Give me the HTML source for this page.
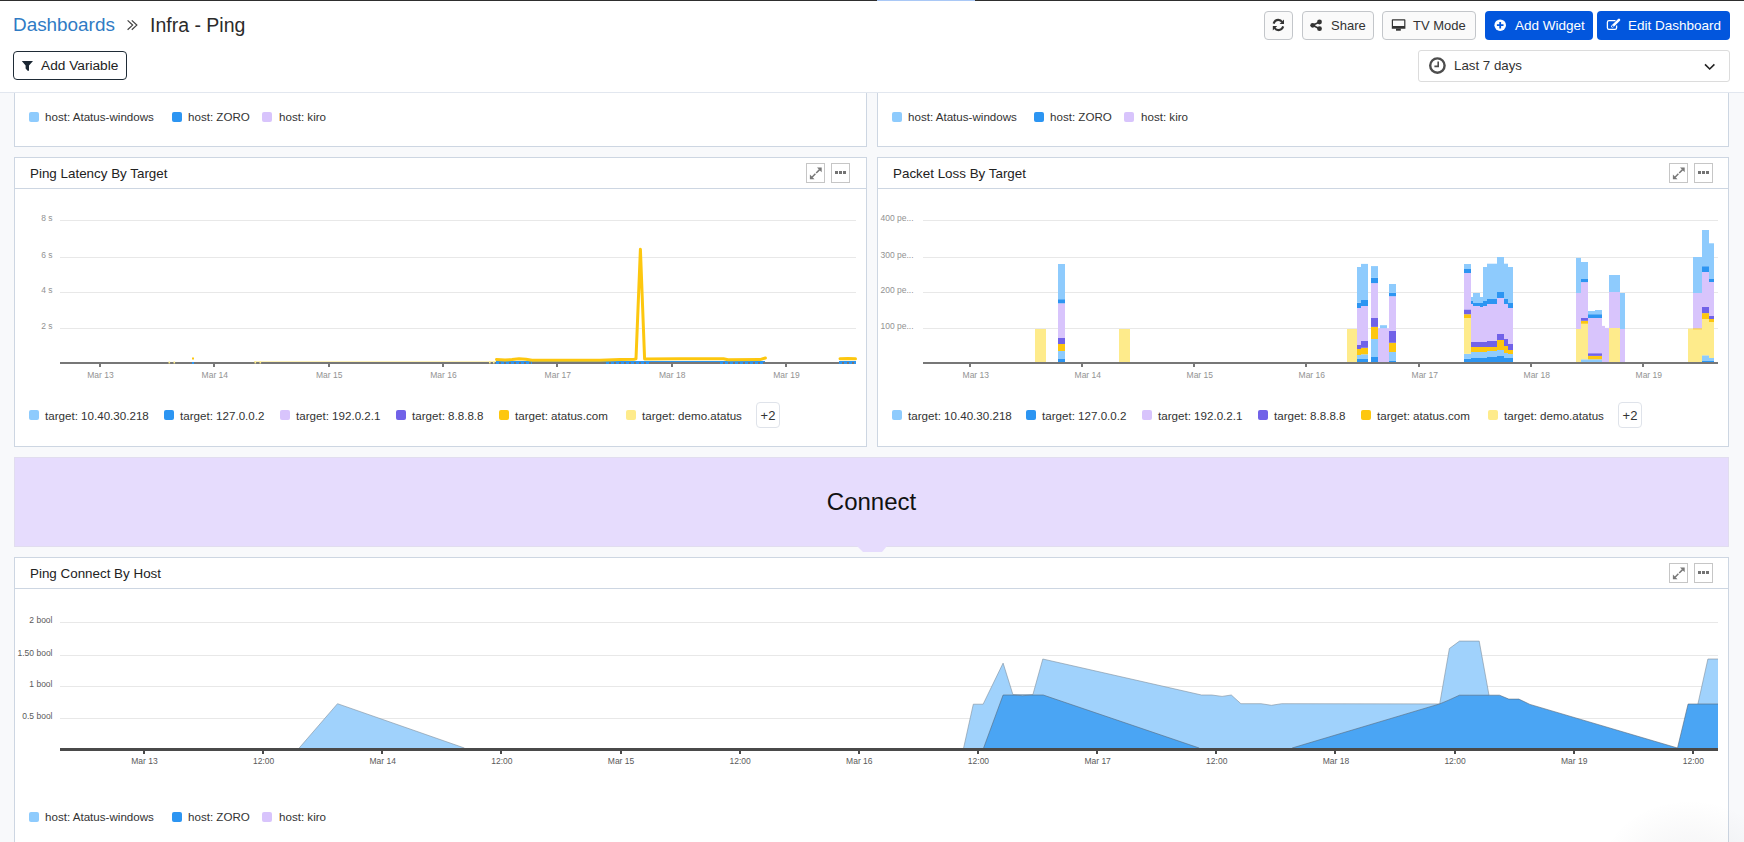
<!DOCTYPE html>
<html><head><meta charset="utf-8"><style>
*{box-sizing:border-box;margin:0;padding:0}
html,body{width:1744px;height:842px;overflow:hidden;background:#fff;font-family:"Liberation Sans",sans-serif;color:#2b2b2b}
.a{position:absolute}
.crumb{top:12px;font-size:18.7px;line-height:24px;white-space:nowrap}
.btn{top:11px;height:29px;border:1px solid #c3c6ca;border-radius:4px;background:#fafafa;font-size:13px;color:#333;white-space:nowrap}
.bbtn{top:11px;height:29px;border-radius:4px;background:#0256dd;color:#fff;font-size:13.5px;white-space:nowrap}
.t{position:absolute;line-height:16px;white-space:nowrap}
#dash{left:0;top:93px;width:1744px;height:749px;background:#f8f9fb;overflow:hidden}
#inner{position:absolute;left:0;top:-93px;width:1744px;height:842px}
.w{position:absolute;background:#fff;border:1px solid #cdd6e2}
.hl{position:absolute;height:1px;background:#cdd6e2}
.wt{position:absolute;font-size:13.4px;line-height:16px;color:#222;white-space:nowrap}
.ib{position:absolute;width:18.5px;height:19.5px;border:1px solid #c6c6c6;background:#fff}
.lg{position:absolute;font-size:11.6px;line-height:14px;color:#333;white-space:nowrap}
.sq{position:absolute;width:10px;height:10px;border-radius:2px}
.plus{position:absolute;width:24px;height:26px;border:1px solid #dfe3ea;border-radius:4px;font-size:13px;line-height:26px;text-align:center;color:#333}
svg{position:absolute;left:0;top:0}
.al{font-family:"Liberation Sans",sans-serif;font-size:8.5px;fill:#929292}
.al2{font-family:"Liberation Sans",sans-serif;font-size:8.5px;fill:#5a5a5a}
</style></head><body>
<div class="a" style="left:0;top:0;width:1744px;height:1px;background:#2e2e2e"></div>
<div class="a" style="left:877px;top:0;width:98px;height:1px;background:#a9c8f6"></div>
<div class="a crumb" style="left:13px;top:13px;font-size:18.9px;color:#2f7bc4">Dashboards</div>
<div class="a crumb" style="left:150px;top:13px;font-size:19.5px;color:#2b2b2b">Infra - Ping</div>
<div class="a btn" style="left:1264px;width:29px"></div>
<div class="a btn" style="left:1302px;width:72px"><span class="t" style="left:28px;top:6px">Share</span></div>
<div class="a btn" style="left:1382px;width:94px"><span class="t" style="left:30px;top:6px">TV Mode</span></div>
<div class="a bbtn" style="left:1485px;width:108px"><span class="t" style="left:30px;top:7px">Add Widget</span></div>
<div class="a bbtn" style="left:1597px;width:133px"><span class="t" style="left:31px;top:7px">Edit Dashboard</span></div>
<div class="a" style="left:13px;top:51px;width:114px;height:29px;border:1.5px solid #1f2b36;border-radius:4px"><span class="t" style="left:27px;top:6px;font-size:13.7px;color:#222">Add Variable</span></div>
<div class="a" style="left:1418px;top:50px;width:312px;height:32px;border:1px solid #dcdcdc;border-radius:3px;background:#fff"><span class="t" style="left:35px;top:7px;font-size:13.3px;color:#333">Last 7 days</span></div>
<div class="a" style="left:0;top:92px;width:1744px;height:1px;background:#e2e7ef"></div>
<svg width="1744" height="92" style="left:0;top:0"><path d="M127.6,20.4 L132.6,25.1 L127.6,29.8 M131.8,20.4 L136.8,25.1 L131.8,29.8" fill="none" stroke="#444" stroke-width="1.25"/><path d="M1273.6,23.6 C1274.6,20.8 1276.8,19.9 1278.3,19.9 C1280.2,19.9 1281.4,20.8 1282.2,22" fill="none" stroke="#333" stroke-width="2.1"/><polygon points="1279.6,24 1284,24 1284,19.6" fill="#333"/><path d="M1283.2,26.4 C1282.2,29.2 1280,30.1 1278.5,30.1 C1276.6,30.1 1275.4,29.2 1274.6,28" fill="none" stroke="#333" stroke-width="2.1"/><polygon points="1277.2,26 1272.8,26 1272.8,30.4" fill="#333"/><path d="M1319.5,22 L1312.7,25.3 L1319.5,28.7" fill="none" stroke="#333" stroke-width="1.6"/><circle cx="1319.5" cy="22" r="2.4" fill="#333"/><circle cx="1312.7" cy="25.3" r="2.4" fill="#333"/><circle cx="1319.5" cy="28.7" r="2.4" fill="#333"/><path d="M1392.6,19.2 h12 a0.8,0.8 0 0 1 0.8,0.8 v8.7 h-13.6 v-8.7 a0.8,0.8 0 0 1 0.8,-0.8 z M1393,20.4 v5.5 h11.2 v-5.5 z" fill="#333" fill-rule="evenodd"/><rect x="1396" y="28.6" width="4.8" height="2.1" fill="#333"/><circle cx="1500.2" cy="25.2" r="5.8" fill="#fff"/><path d="M1500.2,21.9 V28.6 M1496.9,25.2 H1503.5" stroke="#0256dd" stroke-width="1.8"/><path d="M1615.5,20.6 H1609 a1.6,1.6 0 0 0 -1.6,1.6 V27.8 a1.6,1.6 0 0 0 1.6,1.6 H1615 a1.6,1.6 0 0 0 1.6,-1.6 V25.6" fill="none" stroke="#fff" stroke-width="1.3"/><path d="M1612.4,26.4 L1619,19.8" stroke="#fff" stroke-width="2.6" stroke-linecap="round"/><circle cx="1612.8" cy="26.4" r="0.8" fill="#0256dd"/><polygon points="21.8,61 33,61 29,65.4 29,70.8 27.6,70.8 25.6,68.6 25.6,65.4" fill="#1b2733"/><circle cx="1437.4" cy="65.6" r="7.2" fill="none" stroke="#4d4d4d" stroke-width="2.4"/><path d="M1438.2,61.4 V66.4 H1434.4" fill="none" stroke="#4d4d4d" stroke-width="1.6"/><path d="M1705,64.4 L1709.7,69 L1714.4,64.4" fill="none" stroke="#222" stroke-width="1.6"/></svg>
<div class="a" id="dash"><div id="inner">
<div class="w" style="left:14px;top:40px;width:853px;height:107px"></div>
<div class="sq" style="left:29px;top:112px;background:#8ecbfd"></div><div class="lg" style="left:45px;top:110px">host: Atatus-windows</div><div class="sq" style="left:172px;top:112px;background:#2c95f2"></div><div class="lg" style="left:188px;top:110px">host: ZORO</div><div class="sq" style="left:262px;top:112px;background:#d8c4fc"></div><div class="lg" style="left:279px;top:110px">host: kiro</div>
<div class="w" style="left:877px;top:40px;width:852px;height:107px"></div>
<div class="sq" style="left:892px;top:112px;background:#8ecbfd"></div><div class="lg" style="left:908px;top:110px">host: Atatus-windows</div><div class="sq" style="left:1034px;top:112px;background:#2c95f2"></div><div class="lg" style="left:1050px;top:110px">host: ZORO</div><div class="sq" style="left:1124px;top:112px;background:#d8c4fc"></div><div class="lg" style="left:1141px;top:110px">host: kiro</div>
<div class="w" style="left:14px;top:157px;width:853px;height:290px"></div>
<div class="hl" style="left:14px;top:188px;width:853px"></div><div class="wt" style="left:30px;top:166px">Ping Latency By Target</div><div class="ib" style="left:806px;top:163px"></div><div class="ib" style="left:831px;top:163px"></div><svg width="20" height="20" style="left:806px;top:163px"><path d="M13.6,6.6 L10.2,10 M6.0,14.2 L9.4,10.8" stroke="#787878" stroke-width="1.5"/><polygon points="11.0,4.5 15.7,4.5 15.7,9.2" fill="#787878"/><polygon points="3.9,11.6 3.9,16.2 8.5,16.2" fill="#787878"/></svg><svg width="20" height="20" style="left:831px;top:163px"><rect x="4" y="8" width="3" height="3" fill="#737373"/><rect x="8" y="8" width="3" height="3" fill="#737373"/><rect x="12" y="8" width="3" height="3" fill="#737373"/></svg>
<div class="sq" style="left:29px;top:410px;background:#8ecbfd"></div><div class="lg" style="left:45px;top:409px">target: 10.40.30.218</div><div class="sq" style="left:164px;top:410px;background:#2c95f2"></div><div class="lg" style="left:180px;top:409px">target: 127.0.0.2</div><div class="sq" style="left:280px;top:410px;background:#d8c4fc"></div><div class="lg" style="left:296px;top:409px">target: 192.0.2.1</div><div class="sq" style="left:396px;top:410px;background:#7162e8"></div><div class="lg" style="left:412px;top:409px">target: 8.8.8.8</div><div class="sq" style="left:499px;top:410px;background:#fdc70f"></div><div class="lg" style="left:515px;top:409px">target: atatus.com</div><div class="sq" style="left:626px;top:410px;background:#feeb8b"></div><div class="lg" style="left:642px;top:409px">target: demo.atatus</div><div class="plus" style="left:756px;top:402px">+2</div>
<div class="w" style="left:877px;top:157px;width:852px;height:290px"></div>
<div class="hl" style="left:877px;top:188px;width:852px"></div><div class="wt" style="left:893px;top:166px">Packet Loss By Target</div><div class="ib" style="left:1669px;top:163px"></div><div class="ib" style="left:1694px;top:163px"></div><svg width="20" height="20" style="left:1669px;top:163px"><path d="M13.6,6.6 L10.2,10 M6.0,14.2 L9.4,10.8" stroke="#787878" stroke-width="1.5"/><polygon points="11.0,4.5 15.7,4.5 15.7,9.2" fill="#787878"/><polygon points="3.9,11.6 3.9,16.2 8.5,16.2" fill="#787878"/></svg><svg width="20" height="20" style="left:1694px;top:163px"><rect x="4" y="8" width="3" height="3" fill="#737373"/><rect x="8" y="8" width="3" height="3" fill="#737373"/><rect x="12" y="8" width="3" height="3" fill="#737373"/></svg>
<div class="sq" style="left:892px;top:410px;background:#8ecbfd"></div><div class="lg" style="left:908px;top:409px">target: 10.40.30.218</div><div class="sq" style="left:1026px;top:410px;background:#2c95f2"></div><div class="lg" style="left:1042px;top:409px">target: 127.0.0.2</div><div class="sq" style="left:1142px;top:410px;background:#d8c4fc"></div><div class="lg" style="left:1158px;top:409px">target: 192.0.2.1</div><div class="sq" style="left:1258px;top:410px;background:#7162e8"></div><div class="lg" style="left:1274px;top:409px">target: 8.8.8.8</div><div class="sq" style="left:1361px;top:410px;background:#fdc70f"></div><div class="lg" style="left:1377px;top:409px">target: atatus.com</div><div class="sq" style="left:1488px;top:410px;background:#feeb8b"></div><div class="lg" style="left:1504px;top:409px">target: demo.atatus</div><div class="plus" style="left:1618px;top:402px">+2</div>
<div class="a" style="left:14px;top:457px;width:1715px;height:90px;background:#e6dcfd;border:1px solid #e1ddef"></div>
<svg width="1744" height="842" style="left:0;top:0"><polygon points="857,546 887,546 882,552 863,552" fill="#e6dcfd"/></svg>
<div class="a" style="left:14px;top:487px;width:1715px;text-align:center;font-size:24px;line-height:30px;color:#111">Connect</div>
<div class="w" style="left:14px;top:557px;width:1715px;height:320px"></div>
<div class="hl" style="left:14px;top:588px;width:1715px"></div><div class="wt" style="left:30px;top:566px">Ping Connect By Host</div><div class="ib" style="left:1669px;top:563px"></div><div class="ib" style="left:1694px;top:563px"></div><svg width="20" height="20" style="left:1669px;top:563px"><path d="M13.6,6.6 L10.2,10 M6.0,14.2 L9.4,10.8" stroke="#787878" stroke-width="1.5"/><polygon points="11.0,4.5 15.7,4.5 15.7,9.2" fill="#787878"/><polygon points="3.9,11.6 3.9,16.2 8.5,16.2" fill="#787878"/></svg><svg width="20" height="20" style="left:1694px;top:563px"><rect x="4" y="8" width="3" height="3" fill="#737373"/><rect x="8" y="8" width="3" height="3" fill="#737373"/><rect x="12" y="8" width="3" height="3" fill="#737373"/></svg>
<div class="sq" style="left:29px;top:812px;background:#8ecbfd"></div><div class="lg" style="left:45px;top:810px">host: Atatus-windows</div><div class="sq" style="left:172px;top:812px;background:#2c95f2"></div><div class="lg" style="left:188px;top:810px">host: ZORO</div><div class="sq" style="left:262px;top:812px;background:#d8c4fc"></div><div class="lg" style="left:279px;top:810px">host: kiro</div>
<svg width="1744" height="842"><rect x="60" y="220" width="796" height="1" fill="#e8e8e8"/><text class="al" x="52.5" y="221" text-anchor="end">8 s</text><rect x="60" y="257" width="796" height="1" fill="#e8e8e8"/><text class="al" x="52.5" y="258" text-anchor="end">6 s</text><rect x="60" y="292" width="796" height="1" fill="#e8e8e8"/><text class="al" x="52.5" y="293" text-anchor="end">4 s</text><rect x="60" y="328" width="796" height="1" fill="#e8e8e8"/><text class="al" x="52.5" y="329" text-anchor="end">2 s</text><rect x="60" y="362" width="796" height="2" fill="#777"/><rect x="99" y="364" width="2" height="3" fill="#777"/><text class="al" x="100.5" y="378" text-anchor="middle">Mar 13</text><rect x="213" y="364" width="2" height="3" fill="#777"/><text class="al" x="214.82999999999998" y="378" text-anchor="middle">Mar 14</text><rect x="328" y="364" width="2" height="3" fill="#777"/><text class="al" x="329.15999999999997" y="378" text-anchor="middle">Mar 15</text><rect x="442" y="364" width="2" height="3" fill="#777"/><text class="al" x="443.49" y="378" text-anchor="middle">Mar 16</text><rect x="556" y="364" width="2" height="3" fill="#777"/><text class="al" x="557.8199999999999" y="378" text-anchor="middle">Mar 17</text><rect x="671" y="364" width="2" height="3" fill="#777"/><text class="al" x="672.15" y="378" text-anchor="middle">Mar 18</text><rect x="785" y="364" width="2" height="3" fill="#777"/><text class="al" x="786.48" y="378" text-anchor="middle">Mar 19</text><rect x="254" y="361" width="242" height="1" fill="#feeb8b" opacity="0.6"/><rect x="168.5" y="361.5" width="1.6" height="2" fill="#feeb8b"/><rect x="173.5" y="361.5" width="1.6" height="2" fill="#feeb8b"/><rect x="254.5" y="361.5" width="1.6" height="2" fill="#feeb8b"/><rect x="259.5" y="361.5" width="1.6" height="2" fill="#feeb8b"/><rect x="192" y="357.5" width="2" height="2" fill="#fdc70f"/><rect x="192" y="362" width="2" height="2" fill="#2c95f2"/><rect x="489" y="361.5" width="1.6" height="2" fill="#feeb8b"/><rect x="493" y="361.5" width="1.6" height="2" fill="#feeb8b"/><rect x="496" y="361" width="269" height="1" fill="#2c95f2"/><rect x="839" y="361" width="17" height="1" fill="#2c95f2"/><line x1="496" y1="363" x2="532" y2="363" stroke="#2c95f2" stroke-width="2" stroke-dasharray="3,2"/><line x1="606" y1="363" x2="651" y2="363" stroke="#2c95f2" stroke-width="2" stroke-dasharray="3,2"/><line x1="720" y1="363" x2="765" y2="363" stroke="#2c95f2" stroke-width="2" stroke-dasharray="3,2"/><line x1="839" y1="363" x2="856" y2="363" stroke="#2c95f2" stroke-width="2" stroke-dasharray="3,2"/><polyline points="496.5,359.5 505,360 512,359.5 519,358.8 526,359.3 532,360.3 560,360.3 600,360.2 620,359.5 634,359.2 636,358.8 640.4,249.3 644.6,359 680,358.8 723.5,358.8 728,359.8 760,359.6 765.4,358" fill="none" stroke="#fdc70f" stroke-width="3" stroke-linejoin="round" stroke-linecap="round"/><polyline points="840,358.8 848,358.4 855.5,358.8" fill="none" stroke="#fdc70f" stroke-width="3" stroke-linecap="round"/><rect x="923" y="220" width="795" height="1" fill="#e8e8e8"/><text class="al" x="880.5" y="221" text-anchor="start">400 pe...</text><rect x="923" y="257" width="795" height="1" fill="#e8e8e8"/><text class="al" x="880.5" y="258" text-anchor="start">300 pe...</text><rect x="923" y="292" width="795" height="1" fill="#e8e8e8"/><text class="al" x="880.5" y="293" text-anchor="start">200 pe...</text><rect x="923" y="328" width="795" height="1" fill="#e8e8e8"/><text class="al" x="880.5" y="329" text-anchor="start">100 pe...</text><rect x="923" y="362" width="795" height="2" fill="#777"/><rect x="969" y="364" width="2" height="3" fill="#777"/><text class="al" x="975.8" y="378" text-anchor="middle">Mar 13</text><rect x="1081" y="364" width="2" height="3" fill="#777"/><text class="al" x="1087.8" y="378" text-anchor="middle">Mar 14</text><rect x="1193" y="364" width="2" height="3" fill="#777"/><text class="al" x="1199.8" y="378" text-anchor="middle">Mar 15</text><rect x="1305" y="364" width="2" height="3" fill="#777"/><text class="al" x="1311.8" y="378" text-anchor="middle">Mar 16</text><rect x="1418" y="364" width="2" height="3" fill="#777"/><text class="al" x="1424.8" y="378" text-anchor="middle">Mar 17</text><rect x="1530" y="364" width="2" height="3" fill="#777"/><text class="al" x="1536.8" y="378" text-anchor="middle">Mar 18</text><rect x="1642" y="364" width="2" height="3" fill="#777"/><text class="al" x="1648.8" y="378" text-anchor="middle">Mar 19</text><rect x="1035" y="329" width="11" height="33.0" fill="#feeb8b"/><rect x="1058" y="359" width="7" height="3.0" fill="#2c95f2"/><rect x="1058" y="351" width="7" height="8.0" fill="#8ecbfd"/><rect x="1058" y="344" width="7" height="7.0" fill="#fdc70f"/><rect x="1058" y="338" width="7" height="6.0" fill="#7162e8"/><rect x="1058" y="303.3" width="7" height="34.7" fill="#d8c4fc"/><rect x="1058" y="299.2" width="7" height="4.1" fill="#2c95f2"/><rect x="1058" y="264" width="7" height="35.2" fill="#8ecbfd"/><rect x="1119" y="329" width="11" height="33.0" fill="#feeb8b"/><rect x="1347" y="329" width="12" height="33.0" fill="#feeb8b"/><rect x="1357" y="359" width="4" height="3.0" fill="#2c95f2"/><rect x="1357" y="355" width="4" height="4.0" fill="#8ecbfd"/><rect x="1357" y="349" width="4" height="6.0" fill="#fdc70f"/><rect x="1357" y="345" width="4" height="4.0" fill="#7162e8"/><rect x="1357" y="308" width="4" height="37.0" fill="#d8c4fc"/><rect x="1357" y="302.7" width="4" height="5.3" fill="#2c95f2"/><rect x="1357" y="267" width="4" height="35.7" fill="#8ecbfd"/><rect x="1361" y="359" width="7" height="3.0" fill="#2c95f2"/><rect x="1361" y="354.3" width="7" height="4.7" fill="#8ecbfd"/><rect x="1361" y="347.8" width="7" height="6.5" fill="#fdc70f"/><rect x="1361" y="341" width="7" height="6.8" fill="#7162e8"/><rect x="1361" y="306" width="7" height="35.0" fill="#d8c4fc"/><rect x="1361" y="300" width="7" height="6.0" fill="#2c95f2"/><rect x="1361" y="263.9" width="7" height="36.1" fill="#8ecbfd"/><rect x="1371" y="357" width="7" height="5.0" fill="#2c95f2"/><rect x="1371" y="339" width="7" height="18.0" fill="#8ecbfd"/><rect x="1371" y="326.9" width="7" height="12.1" fill="#fdc70f"/><rect x="1371" y="318" width="7" height="8.9" fill="#7162e8"/><rect x="1371" y="283.1" width="7" height="34.9" fill="#d8c4fc"/><rect x="1371" y="277.9" width="7" height="5.2" fill="#2c95f2"/><rect x="1371" y="266.1" width="7" height="11.8" fill="#8ecbfd"/><rect x="1378" y="328.2" width="11" height="33.8" fill="#d8c4fc"/><rect x="1380" y="328.2" width="7" height="33.8" fill="#d8c4fc"/><rect x="1380" y="325.2" width="7" height="3.0" fill="#8ecbfd"/><rect x="1389" y="361" width="7" height="1.0" fill="#2c95f2"/><rect x="1389" y="352" width="7" height="9.0" fill="#8ecbfd"/><rect x="1389" y="342.8" width="7" height="9.2" fill="#fdc70f"/><rect x="1389" y="330.8" width="7" height="12.0" fill="#7162e8"/><rect x="1389" y="296.2" width="7" height="34.6" fill="#d8c4fc"/><rect x="1389" y="292.9" width="7" height="3.3" fill="#2c95f2"/><rect x="1389" y="284" width="7" height="8.9" fill="#8ecbfd"/><rect x="1464" y="358.6" width="7" height="3.4" fill="#2c95f2"/><rect x="1464" y="353.8" width="7" height="4.8" fill="#8ecbfd"/><rect x="1464" y="318" width="7" height="35.8" fill="#feeb8b"/><rect x="1464" y="314.2" width="7" height="3.8" fill="#fdc70f"/><rect x="1464" y="309.4" width="7" height="4.8" fill="#7162e8"/><rect x="1464" y="273" width="7" height="36.4" fill="#d8c4fc"/><rect x="1464" y="269" width="7" height="4.0" fill="#2c95f2"/><rect x="1464" y="264" width="7" height="5.0" fill="#8ecbfd"/><rect x="1471" y="358" width="2" height="4.0" fill="#2c95f2"/><rect x="1471" y="352" width="2" height="6.0" fill="#8ecbfd"/><rect x="1471" y="347" width="2" height="5.0" fill="#fdc70f"/><rect x="1471" y="342" width="2" height="5.0" fill="#7162e8"/><rect x="1471" y="304" width="2" height="38.0" fill="#d8c4fc"/><rect x="1471" y="301" width="2" height="3.0" fill="#2c95f2"/><rect x="1471" y="297" width="2" height="4.0" fill="#8ecbfd"/><rect x="1473" y="358" width="7" height="4.0" fill="#2c95f2"/><rect x="1473" y="352" width="7" height="6.0" fill="#8ecbfd"/><rect x="1473" y="347" width="7" height="5.0" fill="#fdc70f"/><rect x="1473" y="342" width="7" height="5.0" fill="#7162e8"/><rect x="1473" y="306" width="7" height="36.0" fill="#d8c4fc"/><rect x="1473" y="303" width="7" height="3.0" fill="#2c95f2"/><rect x="1473" y="293" width="7" height="10.0" fill="#8ecbfd"/><rect x="1480" y="358" width="3" height="4.0" fill="#2c95f2"/><rect x="1480" y="352" width="3" height="6.0" fill="#8ecbfd"/><rect x="1480" y="347" width="3" height="5.0" fill="#fdc70f"/><rect x="1480" y="342" width="3" height="5.0" fill="#7162e8"/><rect x="1480" y="307" width="3" height="35.0" fill="#d8c4fc"/><rect x="1480" y="303" width="3" height="4.0" fill="#2c95f2"/><rect x="1480" y="297" width="3" height="6.0" fill="#8ecbfd"/><rect x="1483" y="358" width="4" height="4.0" fill="#2c95f2"/><rect x="1483" y="352" width="4" height="6.0" fill="#8ecbfd"/><rect x="1483" y="347" width="4" height="5.0" fill="#fdc70f"/><rect x="1483" y="342" width="4" height="5.0" fill="#7162e8"/><rect x="1483" y="306" width="4" height="36.0" fill="#d8c4fc"/><rect x="1483" y="301" width="4" height="5.0" fill="#2c95f2"/><rect x="1483" y="267" width="4" height="34.0" fill="#8ecbfd"/><rect x="1487" y="357" width="10" height="5.0" fill="#2c95f2"/><rect x="1487" y="351" width="10" height="6.0" fill="#8ecbfd"/><rect x="1487" y="347" width="10" height="4.0" fill="#fdc70f"/><rect x="1487" y="341" width="10" height="6.0" fill="#7162e8"/><rect x="1487" y="304" width="10" height="37.0" fill="#d8c4fc"/><rect x="1487" y="299" width="10" height="5.0" fill="#2c95f2"/><rect x="1487" y="263.7" width="10" height="35.3" fill="#8ecbfd"/><rect x="1497" y="356" width="7" height="6.0" fill="#2c95f2"/><rect x="1497" y="350" width="7" height="6.0" fill="#8ecbfd"/><rect x="1497" y="340" width="7" height="10.0" fill="#fdc70f"/><rect x="1497" y="334" width="7" height="6.0" fill="#7162e8"/><rect x="1497" y="298" width="7" height="36.0" fill="#d8c4fc"/><rect x="1497" y="292" width="7" height="6.0" fill="#2c95f2"/><rect x="1497" y="257" width="7" height="35.0" fill="#8ecbfd"/><rect x="1504" y="358" width="4" height="4.0" fill="#2c95f2"/><rect x="1504" y="353" width="4" height="5.0" fill="#8ecbfd"/><rect x="1504" y="346" width="4" height="7.0" fill="#fdc70f"/><rect x="1504" y="339" width="4" height="7.0" fill="#7162e8"/><rect x="1504" y="304" width="4" height="35.0" fill="#d8c4fc"/><rect x="1504" y="299" width="4" height="5.0" fill="#2c95f2"/><rect x="1504" y="263.7" width="4" height="35.3" fill="#8ecbfd"/><rect x="1508" y="358" width="5" height="4.0" fill="#2c95f2"/><rect x="1508" y="354" width="5" height="4.0" fill="#8ecbfd"/><rect x="1508" y="350" width="5" height="4.0" fill="#fdc70f"/><rect x="1508" y="344" width="5" height="6.0" fill="#7162e8"/><rect x="1508" y="308" width="5" height="36.0" fill="#d8c4fc"/><rect x="1508" y="303" width="5" height="5.0" fill="#2c95f2"/><rect x="1508" y="267" width="5" height="36.0" fill="#8ecbfd"/><rect x="1576" y="329" width="5" height="33.0" fill="#feeb8b"/><rect x="1576" y="293" width="5" height="36.0" fill="#d8c4fc"/><rect x="1576" y="257.9" width="5" height="35.1" fill="#8ecbfd"/><rect x="1581" y="359.3" width="7" height="2.7" fill="#8ecbfd"/><rect x="1581" y="323.8" width="7" height="35.5" fill="#feeb8b"/><rect x="1581" y="320.8" width="7" height="3.0" fill="#fdc70f"/><rect x="1581" y="318" width="7" height="2.8" fill="#7162e8"/><rect x="1581" y="282.1" width="7" height="35.9" fill="#d8c4fc"/><rect x="1581" y="279" width="7" height="3.1" fill="#2c95f2"/><rect x="1581" y="262" width="7" height="17.0" fill="#8ecbfd"/><rect x="1588" y="359.3" width="7" height="2.7" fill="#8ecbfd"/><rect x="1588" y="355.9" width="7" height="3.4" fill="#fdc70f"/><rect x="1588" y="353.2" width="7" height="2.7" fill="#7162e8"/><rect x="1588" y="318" width="7" height="35.2" fill="#d8c4fc"/><rect x="1588" y="314.2" width="7" height="3.8" fill="#2c95f2"/><rect x="1588" y="311" width="7" height="3.2" fill="#8ecbfd"/><rect x="1595" y="359.3" width="7" height="2.7" fill="#8ecbfd"/><rect x="1595" y="355.9" width="7" height="3.4" fill="#fdc70f"/><rect x="1595" y="353.2" width="7" height="2.7" fill="#7162e8"/><rect x="1595" y="318" width="7" height="35.2" fill="#d8c4fc"/><rect x="1595" y="314.2" width="7" height="3.8" fill="#2c95f2"/><rect x="1595" y="310" width="7" height="4.2" fill="#8ecbfd"/><rect x="1602" y="325.9" width="3" height="36.1" fill="#d8c4fc"/><rect x="1605" y="327.9" width="4" height="34.1" fill="#d8c4fc"/><rect x="1609" y="328" width="11" height="34.0" fill="#feeb8b"/><rect x="1609" y="292" width="11" height="36.0" fill="#d8c4fc"/><rect x="1609" y="275" width="11" height="17.0" fill="#8ecbfd"/><rect x="1620" y="329" width="5" height="33.0" fill="#d8c4fc"/><rect x="1620" y="293" width="5" height="36.0" fill="#8ecbfd"/><rect x="1688" y="328.6" width="5" height="33.4" fill="#feeb8b"/><rect x="1693" y="329.5" width="9" height="32.5" fill="#feeb8b"/><rect x="1693" y="328.3" width="9" height="1.2" fill="#fdc70f"/><rect x="1693" y="293" width="9" height="35.3" fill="#d8c4fc"/><rect x="1693" y="257" width="9" height="36.0" fill="#8ecbfd"/><rect x="1702" y="360.5" width="7" height="1.5" fill="#2c95f2"/><rect x="1702" y="355.3" width="7" height="5.2" fill="#8ecbfd"/><rect x="1702" y="319.1" width="7" height="36.2" fill="#feeb8b"/><rect x="1702" y="313.1" width="7" height="6.0" fill="#fdc70f"/><rect x="1702" y="307" width="7" height="6.1" fill="#7162e8"/><rect x="1702" y="272" width="7" height="35.0" fill="#d8c4fc"/><rect x="1702" y="266.2" width="7" height="5.8" fill="#2c95f2"/><rect x="1702" y="230" width="7" height="36.2" fill="#8ecbfd"/><rect x="1709" y="361" width="5" height="1.0" fill="#2c95f2"/><rect x="1709" y="358" width="5" height="3.0" fill="#8ecbfd"/><rect x="1709" y="322" width="5" height="36.0" fill="#feeb8b"/><rect x="1709" y="319" width="5" height="3.0" fill="#fdc70f"/><rect x="1709" y="316" width="5" height="3.0" fill="#7162e8"/><rect x="1709" y="282" width="5" height="34.0" fill="#d8c4fc"/><rect x="1709" y="279" width="5" height="3.0" fill="#2c95f2"/><rect x="1709" y="243.3" width="5" height="35.7" fill="#8ecbfd"/><rect x="60" y="622" width="1658" height="1" fill="#e8e8e8"/><text class="al2" x="52.5" y="622.5" text-anchor="end">2 bool</text><rect x="60" y="655" width="1658" height="1" fill="#e8e8e8"/><text class="al2" x="52.5" y="655.5" text-anchor="end">1.50 bool</text><rect x="60" y="686" width="1658" height="1" fill="#e8e8e8"/><text class="al2" x="52.5" y="686.5" text-anchor="end">1 bool</text><rect x="60" y="718" width="1658" height="1" fill="#e8e8e8"/><text class="al2" x="52.5" y="718.5" text-anchor="end">0.5 bool</text><polygon points="299.2,748 337.5,703.7 464.4,748" fill="#a0d2fc"/><polygon points="963.6,748 973.3,704.2 983.1,704.2 1003.1,663.1 1012.9,694.5 1032.9,694.5 1042.8,659 1201.5,695 1211.8,695 1222.1,696.4 1231.3,695 1240.9,703.7 1261.1,703.7 1271.4,705.3 1281.7,703.7 1439.7,703.9 1449.4,648.5 1459.5,641.1 1479.2,641.1 1489,695.2 1489,748" fill="#a0d2fc"/><polygon points="1697.9,748 1697.9,704 1707.9,659 1718,659 1718,748" fill="#a0d2fc"/><polyline points="299.2,748 337.5,703.7 464.4,748" fill="none" stroke="#7f8e9c" stroke-width="0.8" stroke-opacity="0.75"/><polyline points="963.6,748 973.3,704.2 983.1,704.2 1003.1,663.1 1012.9,694.5 1032.9,694.5 1042.8,659 1201.5,695 1211.8,695 1222.1,696.4 1231.3,695 1240.9,703.7 1261.1,703.7 1271.4,705.3 1281.7,703.7 1439.7,703.9 1449.4,648.5 1459.5,641.1 1479.2,641.1 1489,695.2" fill="none" stroke="#7f8e9c" stroke-width="0.8" stroke-opacity="0.75"/><polyline points="1697.9,748 1697.9,704 1707.9,659 1718,659" fill="none" stroke="#7f8e9c" stroke-width="0.8" stroke-opacity="0.75"/><polygon points="983.6,748 1003.1,695 1012.9,695 1022.6,695.7 1032.9,695 1043.2,695 1199.2,748" fill="#4aa5f4"/><polygon points="1292.1,748 1439.7,703.9 1448.1,700.4 1459.5,695.2 1469.2,695.2 1499.5,695.2 1508.8,699.1 1518.8,699.1 1529.9,704.4 1677.5,748" fill="#4aa5f4"/><polygon points="1677.5,748 1688.1,704 1718,704 1718,748" fill="#4aa5f4"/><polyline points="983.6,748 1003.1,695 1012.9,695 1022.6,695.7 1032.9,695 1043.2,695 1199.2,748" fill="none" stroke="#56687a" stroke-width="0.8" stroke-opacity="0.75"/><polyline points="1292.1,748 1439.7,703.9 1448.1,700.4 1459.5,695.2 1469.2,695.2 1499.5,695.2 1508.8,699.1 1518.8,699.1 1529.9,704.4 1677.5,748" fill="none" stroke="#56687a" stroke-width="0.8" stroke-opacity="0.75"/><polyline points="1677.5,748 1688.1,704 1718,704" fill="none" stroke="#56687a" stroke-width="0.8" stroke-opacity="0.75"/><rect x="60" y="748" width="1658" height="3" fill="#4a4a4a"/><rect x="143" y="751" width="2" height="3" fill="#4a4a4a"/><text class="al2" x="144.5" y="764" text-anchor="middle">Mar 13</text><rect x="262" y="751" width="2" height="3" fill="#4a4a4a"/><text class="al2" x="263.64" y="764" text-anchor="middle">12:00</text><rect x="381" y="751" width="2" height="3" fill="#4a4a4a"/><text class="al2" x="382.78" y="764" text-anchor="middle">Mar 14</text><rect x="500" y="751" width="2" height="3" fill="#4a4a4a"/><text class="al2" x="501.92" y="764" text-anchor="middle">12:00</text><rect x="620" y="751" width="2" height="3" fill="#4a4a4a"/><text class="al2" x="621.06" y="764" text-anchor="middle">Mar 15</text><rect x="739" y="751" width="2" height="3" fill="#4a4a4a"/><text class="al2" x="740.2" y="764" text-anchor="middle">12:00</text><rect x="858" y="751" width="2" height="3" fill="#4a4a4a"/><text class="al2" x="859.34" y="764" text-anchor="middle">Mar 16</text><rect x="977" y="751" width="2" height="3" fill="#4a4a4a"/><text class="al2" x="978.48" y="764" text-anchor="middle">12:00</text><rect x="1096" y="751" width="2" height="3" fill="#4a4a4a"/><text class="al2" x="1097.62" y="764" text-anchor="middle">Mar 17</text><rect x="1215" y="751" width="2" height="3" fill="#4a4a4a"/><text class="al2" x="1216.76" y="764" text-anchor="middle">12:00</text><rect x="1334" y="751" width="2" height="3" fill="#4a4a4a"/><text class="al2" x="1335.9" y="764" text-anchor="middle">Mar 18</text><rect x="1454" y="751" width="2" height="3" fill="#4a4a4a"/><text class="al2" x="1455.04" y="764" text-anchor="middle">12:00</text><rect x="1573" y="751" width="2" height="3" fill="#4a4a4a"/><text class="al2" x="1574.18" y="764" text-anchor="middle">Mar 19</text><rect x="1692" y="751" width="2" height="3" fill="#4a4a4a"/><text class="al2" x="1693.32" y="764" text-anchor="middle">12:00</text></svg>
<div class="a" style="left:1560px;top:742px;width:184px;height:100px;background:radial-gradient(ellipse 90px 72px at 130px 130px, rgba(60,60,80,0.06), rgba(60,60,80,0.035) 50%, rgba(60,60,80,0) 100%)"></div>
</div></div>
</body></html>
